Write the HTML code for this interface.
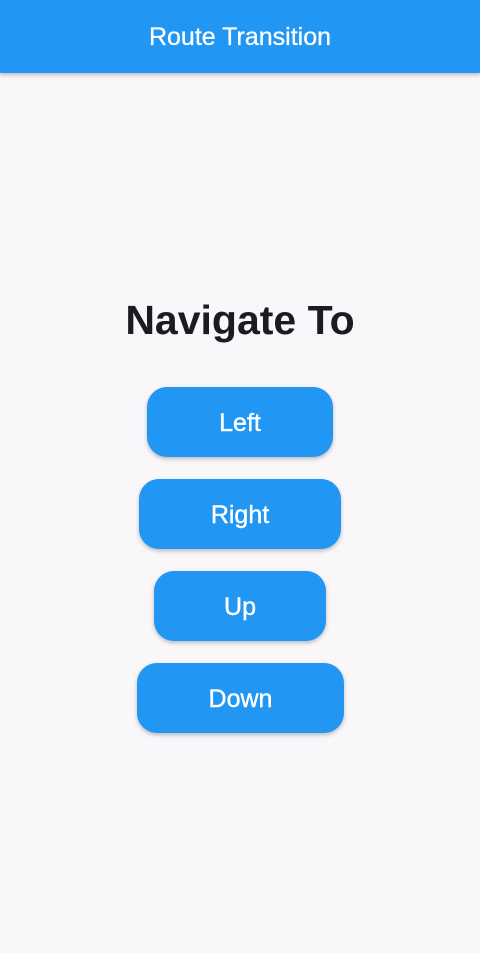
<!DOCTYPE html>
<html><head><style>
body{margin:0;width:480px;height:953px;background:#f9f7fa;font-family:"Liberation Sans",sans-serif;position:relative;overflow:hidden}
.bar{position:absolute;left:0;top:0;width:480px;height:73px;background:#2196f3;box-shadow:0 2px 4px rgba(0,0,0,.25);color:#fff;font-size:25px;text-align:center;line-height:75px;-webkit-text-stroke:0.3px #fff}
h1{position:absolute;top:296px;left:0;width:480px;margin:0;text-align:center;font-size:41px;font-weight:bold;color:#1d1b20;line-height:48px}
.b{position:absolute;height:70px;background:#2196f3;border-radius:20px;color:#fff;font-size:25px;text-align:center;line-height:72px;box-shadow:0 2px 4px rgba(0,0,0,.25);-webkit-text-stroke:0.4px #fff}
</style></head><body>
<div class="bar">Route Transition</div>
<h1>Navigate To</h1>
<div class="b" style="left:147px;top:387px;width:186px">Left</div>
<div class="b" style="left:139px;top:479px;width:202px">Right</div>
<div class="b" style="left:154px;top:571px;width:172px">Up</div>
<div class="b" style="left:137px;top:663px;width:207px">Down</div>
</body></html>
